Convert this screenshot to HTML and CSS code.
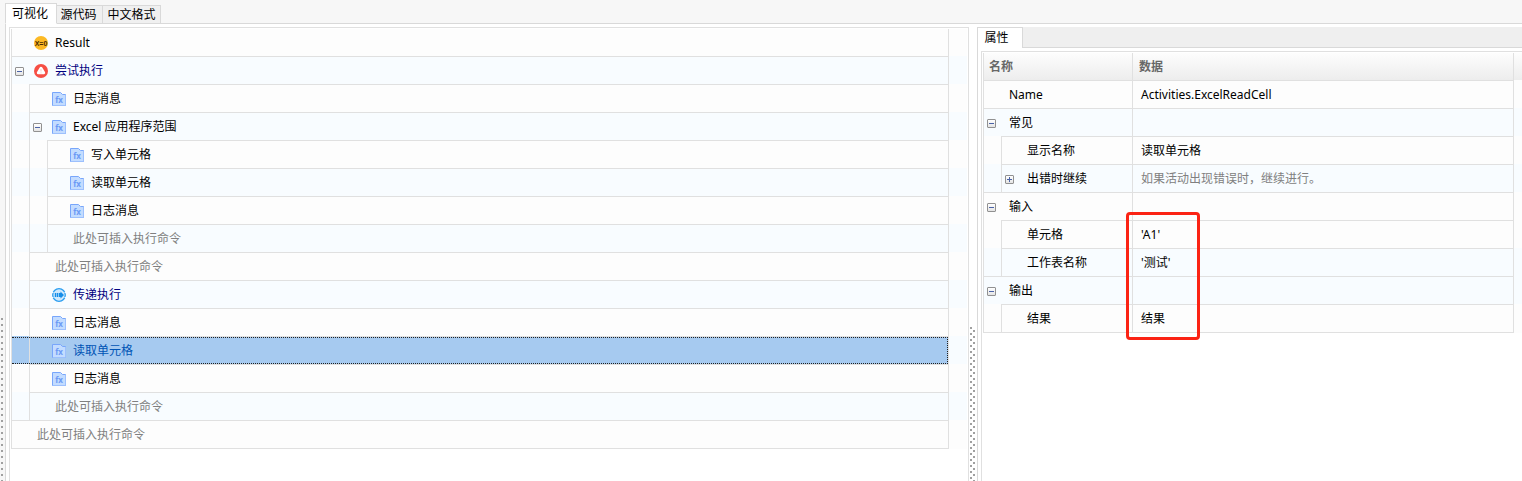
FILE: index.html
```html
<!DOCTYPE html>
<html lang="zh-CN">
<head>
<meta charset="utf-8">
<title>可视化</title>
<link rel="stylesheet" href="styles.css">
</head>
<body>
<svg class="defs" aria-hidden="true">
  <symbol id="i-fx" viewBox="0 0 14 14">
    <path d="M.5 13.500V.5H8.500L10.500 2.500H13.500V13.500Z" fill="#c3dcff" stroke="#78a6fb"/>
    <path d="M1 13.500H13.500V3" fill="none" stroke="#9dc0fd"/>
    <text x="7" y="11" text-anchor="middle" class="fx">fx</text>
  </symbol>
  <symbol id="i-var" viewBox="0 0 14 14">
    <circle cx="7" cy="7" r="7" fill="#fcb924"/>
    <text x="7" y="10" text-anchor="middle" class="xo">X=0</text>
  </symbol>
  <symbol id="i-try" viewBox="0 0 14 14">
    <circle cx="7" cy="7" r="7" fill="#f64f45"/>
    <path d="M7 4.400 9.700 8.800H4.300Z" fill="#fff" stroke="#fff" stroke-width="3" stroke-linejoin="round"/>
    <path d="M7 5V7.500M7 8.400V9.400" stroke="#fbc9c5"/>
  </symbol>
  <symbol id="i-pass" viewBox="0 0 14 14">
    <circle cx="7" cy="7" r="6.300" fill="#cfe9fd" stroke="#2a9df0" stroke-width="1.300"/>
    <path d="M0 4.500H1.500M0 9.500H1.500M12.500 4.500H14M12.500 9.500H14" stroke="#f8fcff"/>
    <path d="M3.500 5V9M5.500 5V9" stroke="#168ee8" stroke-width="1.400"/>
    <path d="M6.800 5H8.500V3.500L12 7 8.500 10.500V9H6.800Z" fill="#168ee8"/>
  </symbol>
</svg>
<nav class="tabs">
  <button class="tab active">可视化</button>
  <button class="tab">源代码</button>
  <button class="tab wide">中文格式</button>
</nav>
<div class="body">
  <div class="rail"><div class="dots"></div></div>
  <main class="work">
    <section class="flow">
      <div class="tree" role="tree">
        <div class="row" role="treeitem"><div class="line"><div class="node"><i class="gap"></i><svg class="icon"><use href="#i-var"/></svg><span>Result</span></div></div></div>
        <div class="row" role="treeitem"><div class="line"><div class="node block"><button class="toggle" aria-label="折叠"></button><svg class="icon"><use href="#i-try"/></svg><span>尝试执行</span></div></div></div>
        <div class="row" role="treeitem"><div class="line"><i class="guide"></i><div class="node"><i class="gap"></i><svg class="icon"><use href="#i-fx"/></svg><span>日志消息</span></div></div></div>
        <div class="row" role="treeitem"><div class="line"><i class="guide"></i><div class="node"><button class="toggle" aria-label="折叠"></button><svg class="icon"><use href="#i-fx"/></svg><span>Excel 应用程序范围</span></div></div></div>
        <div class="row" role="treeitem"><div class="line"><i class="guide"></i><i class="guide"></i><div class="node"><i class="gap"></i><svg class="icon"><use href="#i-fx"/></svg><span>写入单元格</span></div></div></div>
        <div class="row" role="treeitem"><div class="line"><i class="guide"></i><i class="guide"></i><div class="node"><i class="gap"></i><svg class="icon"><use href="#i-fx"/></svg><span>读取单元格</span></div></div></div>
        <div class="row" role="treeitem"><div class="line"><i class="guide"></i><i class="guide"></i><div class="node"><i class="gap"></i><svg class="icon"><use href="#i-fx"/></svg><span>日志消息</span></div></div></div>
        <div class="row" role="treeitem"><div class="line"><i class="guide"></i><i class="guide"></i><div class="node hint"><span>此处可插入执行命令</span></div></div></div>
        <div class="row" role="treeitem"><div class="line"><i class="guide"></i><div class="node hint"><span>此处可插入执行命令</span></div></div></div>
        <div class="row" role="treeitem"><div class="line"><i class="guide"></i><div class="node block"><i class="gap"></i><svg class="icon"><use href="#i-pass"/></svg><span>传递执行</span></div></div></div>
        <div class="row" role="treeitem"><div class="line"><i class="guide"></i><div class="node"><i class="gap"></i><svg class="icon"><use href="#i-fx"/></svg><span>日志消息</span></div></div></div>
        <div class="row" role="treeitem" aria-selected="true"><div class="line selected"><i class="guide"></i><div class="node"><i class="gap"></i><svg class="icon"><use href="#i-fx"/></svg><span>读取单元格</span></div></div></div>
        <div class="row" role="treeitem"><div class="line"><i class="guide"></i><div class="node"><i class="gap"></i><svg class="icon"><use href="#i-fx"/></svg><span>日志消息</span></div></div></div>
        <div class="row" role="treeitem"><div class="line"><i class="guide"></i><div class="node hint"><span>此处可插入执行命令</span></div></div></div>
        <div class="row last" role="treeitem"><div class="line"><div class="node hint"><span>此处可插入执行命令</span></div></div></div>
      </div>
    </section>
    <div class="splitter"></div>
    <section class="props">
      <div class="props-tabs"><button class="props-tab">属性</button></div>
      <div class="props-box">
        <div class="grid-wrap">
          <table class="grid">
            <thead><tr><th class="c-name">名称</th><th class="c-data">数据</th><th class="c-rest"></th></tr></thead>
            <tbody>
              <tr><td><div class="cell"><div class="item"><i class="gap"></i>Name</div></div></td><td class="val">Activities.ExcelReadCell</td><td></td></tr>
              <tr class="alt"><td><div class="cell"><div class="item"><button class="toggle" aria-label="折叠"></button>常见</div></div></td><td class="val"></td><td></td></tr>
              <tr><td><div class="cell"><i class="guide"></i><div class="item"><i class="gap"></i>显示名称</div></div></td><td class="val">读取单元格</td><td></td></tr>
              <tr class="alt"><td><div class="cell"><i class="guide"></i><div class="item"><button class="toggle plus" aria-label="展开"></button>出错时继续</div></div></td><td class="val muted">如果活动出现错误时，继续进行。</td><td></td></tr>
              <tr><td><div class="cell"><div class="item"><button class="toggle" aria-label="折叠"></button>输入</div></div></td><td class="val"></td><td></td></tr>
              <tr><td><div class="cell"><i class="guide"></i><div class="item"><i class="gap"></i>单元格</div></div></td><td class="val">'A1'</td><td></td></tr>
              <tr class="alt"><td><div class="cell"><i class="guide"></i><div class="item"><i class="gap"></i>工作表名称</div></div></td><td class="val">'测试'</td><td></td></tr>
              <tr class="alt"><td><div class="cell"><div class="item"><button class="toggle" aria-label="折叠"></button>输出</div></div></td><td class="val"></td><td></td></tr>
              <tr class="end"><td><div class="cell"><i class="guide"></i><div class="item"><i class="gap"></i>结果</div></div></td><td class="val">结果</td><td></td></tr>
            </tbody>
          </table>
          <div class="marker"></div>
        </div>
      </div>
    </section>
  </main>
</div>
</body>
</html>
```
FILE: styles.css
```css
:root {
  --line: #e0e0e0;
  --edge: #d9d9d9;
  --even: #f8fcff;
  --odd: #fdfdfd;
}
* { box-sizing: border-box; }
body {
  margin: 0;
  height: 100vh;
  display: flex;
  flex-direction: column;
  overflow: hidden;
  background: #f7f7f7;
  color: #000;
  font: 12px/20px "Noto Sans", "Noto Sans CJK SC", sans-serif;
}
button { font: inherit; color: inherit; padding: 0; margin: 0; border-radius: 0; }
.defs { display: none; }
.fx { font: 700 8px "Open Sans", sans-serif; fill: #6c9af5; }
.xo { font: 700 7px "Liberation Sans", sans-serif; fill: #4a2a00; }

/* document tabs */
.tabs { display: flex; align-items: flex-end; height: 24px; flex: none; padding-left: 5px; }
.tabs::after { content: ""; flex: 1; border-bottom: 1px solid var(--edge); }
.tab {
  height: 19px;
  width: 46px;
  padding-right: 2px;
  line-height: 18px;
  background: #f0f0f0;
  border: 1px solid var(--edge);
  border-left: 0;
}
.tab.wide { width: 58px; padding: 0; }
.tab.active {
  width: 52px;
  height: 21px;
  background: #fff;
  border-left: 1px solid var(--edge);
  border-bottom-color: #fff;
}

/* main area */
.body { flex: 1; min-height: 0; display: flex; }
.rail { width: 5px; flex: none; padding: 294px 0 0 1px; }
.dots {
  width: 2px;
  height: 100%;
  background: repeating-linear-gradient(#a0a0a0 0 2px, transparent 2px 6px);
}
.work {
  flex: 1;
  min-width: 0;
  display: grid;
  grid-template-columns: 960fr 8px 545fr;
  padding: 3px 0 0 3px;
  background: #fff;
  border-left: 1px solid var(--edge);
}
.flow { border: 1px solid var(--line); border-bottom: 0; padding: 1px 1px 0; min-width: 0; }
.splitter {
  margin: 300px 0 0 1px;
  background:
    repeating-linear-gradient(#a0a0a0 0 2px, transparent 2px 6px) 0 0 / 2px 100% no-repeat,
    repeating-linear-gradient(transparent 0 3px, #a0a0a0 3px 5px, transparent 5px 6px) 3px 0 / 2px 100% no-repeat;
}

/* activity tree */
.row { background: var(--odd); padding-right: 18px; }
.row:nth-child(even) { background: var(--even); }
.line {
  position: relative;
  display: flex;
  height: 28px;
  border: solid var(--line);
  border-width: 0 1px;
}
.row:first-child .line { height: 27px; }
.row:first-child .node { border-top: 0; }
.last .line { height: 29px; border-bottom-width: 1px; }
.guide { width: 18px; flex: none; border-right: 1px solid var(--line); }
.node {
  flex: 1;
  display: flex;
  align-items: center;
  padding-left: 3px;
  border-top: 1px solid var(--line);
}
.guide + .node { margin-left: -1px; padding-left: 4px; }
.block { color: #000080; }
.hint { color: #808080; padding-left: 25px; }
.guide + .hint { padding-left: 26px; }
.icon { width: 14px; height: 14px; margin: 1px 7px 0 10px; flex: none; }
.gap { width: 9px; flex: none; }
.toggle {
  width: 9px;
  height: 9px;
  flex: none;
  margin-top: 1px;
  border: 1px solid #919191;
  border-radius: 1px;
  background: linear-gradient(#4b63a7, #4b63a7) center / 5px 1px no-repeat, linear-gradient(#fff, #e4e4e4);
}
.toggle.plus {
  background:
    linear-gradient(#4b63a7, #4b63a7) center / 5px 1px no-repeat,
    linear-gradient(#4b63a7, #4b63a7) center / 1px 5px no-repeat,
    linear-gradient(#fff, #e4e4e4);
}
.selected { background: #a6caf0; color: #0054b5; }
.selected::after {
  content: "";
  position: absolute;
  inset: 1px 0 0 0;
  border: 1px dotted #222;
  border-left: 0;
}

/* properties panel */
.props { min-width: 0; border-left: 1px solid var(--edge); }
.props-tabs { display: flex; height: 21px; }
.props-tabs::after { content: ""; flex: 1; background: #efefef; border-bottom: 1px solid var(--edge); }
.props-tab {
  width: 45px;
  padding-right: 7px;
  background: #fff;
  border: solid var(--edge);
  border-width: 1px 1px 0 0;
  line-height: 18px;
}
.props-box {
  height: calc(100% - 24px);
  margin: 3px 0 0 3px;
  padding: 1px 0 0 1px;
  border: solid var(--line);
  border-width: 1px 0 0 1px;
}
.grid-wrap { position: relative; }
.grid { width: 100%; table-layout: fixed; border-spacing: 0; border-left: 1px solid var(--line); }
.grid th, .grid td { padding: 0; height: 28px; text-align: left; border: 0 solid var(--line); }
.grid th {
  height: 27px;
  color: #686868;
  background: linear-gradient(#fdfdfd, #ededed);
  font-weight: 700;
  padding-left: 5px;
}
.grid .c-name { width: 148px; }
.grid .c-data { border-width: 0 1px; padding-left: 6px; }
.grid .c-rest { width: 8px; padding: 0; }
.grid tbody tr { background: var(--odd); }
.grid tbody .alt { background: var(--even); }
.grid .val { border-width: 1px 1px 0; padding-left: 8px; }
.grid .muted { color: #808080; }
.cell { display: flex; height: 28px; }
.item {
  flex: 1;
  display: flex;
  align-items: center;
  padding-left: 3px;
  border-top: 1px solid var(--line);
}
.item .toggle, .item .gap { margin-right: 13px; }
.end .item, .grid .end .val { border-bottom: 1px solid var(--line); }
.grid .end td, .end .cell { height: 29px; }
.end .guide { border-bottom: 1px solid var(--line); }
.marker {
  position: absolute;
  left: 143px;
  top: 159px;
  width: 74px;
  height: 128px;
  border: 3px solid #fb2314;
  border-radius: 4px;
}
```
